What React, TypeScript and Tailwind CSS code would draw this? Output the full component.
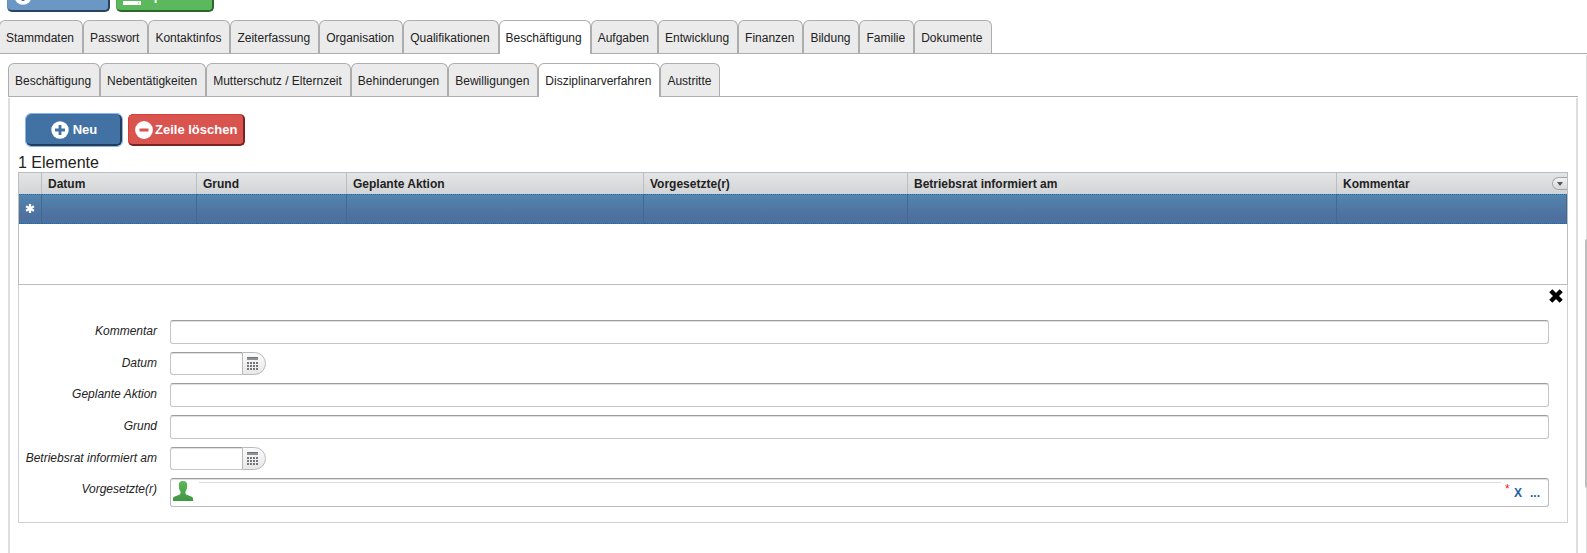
import type { ReactNode } from "react";

const mainTabs = [
  "Stammdaten",
  "Passwort",
  "Kontaktinfos",
  "Zeiterfassung",
  "Organisation",
  "Qualifikationen",
  "Beschäftigung",
  "Aufgaben",
  "Entwicklung",
  "Finanzen",
  "Bildung",
  "Familie",
  "Dokumente",
];

const subTabs = [
  "Beschäftigung",
  "Nebentätigkeiten",
  "Mutterschutz / Elternzeit",
  "Behinderungen",
  "Bewilligungen",
  "Disziplinarverfahren",
  "Austritte",
];

const columns = [
  { label: "Datum", width: "w-[155px]" },
  { label: "Grund", width: "w-[150px]" },
  { label: "Geplante Aktion", width: "w-[297px]" },
  { label: "Vorgesetzte(r)", width: "w-[264px]" },
  { label: "Betriebsrat informiert am", width: "w-[429px]" },
  { label: "Kommentar", width: "w-auto" },
];

function Tabs({ items, active }: { items: string[]; active: string }) {
  return (
    <div role="tablist" className="flex border-b border-[#adadad]">
      {items.map((item) => (
        <button
          key={item}
          role="tab"
          aria-selected={item === active}
          className={
            item === active
              ? "-mb-px h-[34px] rounded-t-md border border-b-0 border-[#adadad] bg-white pt-px pr-2 pl-[6px] whitespace-nowrap"
              : "h-[33px] rounded-t-md border border-b-0 border-[#adadad] bg-[#ebebeb] pt-[2px] pr-2 pl-[6px] whitespace-nowrap"
          }
        >
          {item}
        </button>
      ))}
    </div>
  );
}

function PlusIcon() {
  return (
    <svg viewBox="0 0 18 18" className="size-[18px]" aria-hidden="true">
      <circle cx="9" cy="9" r="8.7" fill="#fff" />
      <path d="M9 4v10M4 9h10" stroke="#4272a4" strokeWidth="2.8" />
    </svg>
  );
}

function MinusIcon() {
  return (
    <svg viewBox="0 0 18 18" className="size-[18px]" aria-hidden="true">
      <circle cx="9" cy="9" r="8.9" fill="#fff" />
      <path d="M4.500 9h9" stroke="#d9534f" strokeWidth="3" />
    </svg>
  );
}

function DiskIcon() {
  return (
    <svg viewBox="0 0 18 18" className="size-[18px]" aria-hidden="true">
      <path d="M0 14h18v4H0zM3 1h12v11H3z" fill="#fff" />
      <path d="M15 16h1" stroke="#5cb85c" />
    </svg>
  );
}

function CalendarIcon() {
  return (
    <svg viewBox="0 0 11 13" className="h-[13px] w-[11px]" shapeRendering="crispEdges" aria-hidden="true">
      <path d="M0 0h11v3H0z" fill="#8d9299" />
      <path d="M0 .5h11" stroke="#6f747b" />
      <path
        d="M0 6h11M0 9h11M0 12h11"
        stroke="#73777d"
        strokeWidth="2"
        strokeDasharray="2 1"
      />
    </svg>
  );
}

function PersonIcon() {
  return (
    <svg viewBox="0 0 20 20" className="h-5 w-5" aria-hidden="true">
      <defs>
        <linearGradient id="person" x1="0" y1="0" x2="0" y2="1">
          <stop offset="0" stopColor="#5cb85c" />
          <stop offset="1" stopColor="#419641" />
        </linearGradient>
      </defs>
      <path
        d="M10 0c3 0 4.200 1.500 4.200 4.200 0 2.600-.4 4.600-1.700 6.300v1.600c0 .9.400 1.400 1.300 1.700l4.400 1.600c1.300.5 1.800 1 1.800 2.100V20H0v-2.500c0-1.100.5-1.600 1.800-2.100l4.400-1.600c.9-.3 1.300-.8 1.300-1.700v-1.600C6.200 8.800 5.800 6.800 5.800 4.200 5.800 1.500 7 0 10 0z"
        fill="url(#person)"
      />
    </svg>
  );
}

function FormRow({ id, label, children }: { id: string; label: string; children: ReactNode }) {
  return (
    <div className="flex">
      <label htmlFor={id} className="w-[138px] shrink-0 pt-[3px] text-right leading-4 italic">
        {label}
      </label>
      <div className="ml-[13px] flex min-w-0 flex-1">{children}</div>
    </div>
  );
}

function TextField({ id, label }: { id: string; label: string }) {
  return (
    <FormRow id={id} label={label}>
      <input
        id={id}
        type="text"
        className="h-6 w-full rounded-[3px] border border-[#c5c5c5] border-t-[#9d9d9d] bg-white px-1 shadow-[inset_0_1px_0_#e0e0e0]"
      />
    </FormRow>
  );
}

function DateField({ id, label }: { id: string; label: string }) {
  return (
    <FormRow id={id} label={label}>
      <input
        id={id}
        type="text"
        className="h-[23px] w-[72px] rounded-l-[3px] border border-r-0 border-[#c5c5c5] border-t-[#9d9d9d] bg-white px-1 shadow-[inset_0_1px_0_#e0e0e0]"
      />
      <button
        type="button"
        aria-label={`${label} auswählen`}
        className="flex h-[23px] w-6 items-center rounded-r-full border border-[#b9b9b9] bg-linear-to-b from-[#fafafa] to-[#e8e8e8] pl-1"
      >
        <CalendarIcon />
      </button>
    </FormRow>
  );
}

export default function App() {
  return (
    <div className="flex h-screen flex-col overflow-hidden bg-white font-['Liberation_Sans',Arial,sans-serif] text-xs text-[#222]">
      <div className="flex h-3 shrink-0 items-end gap-[6px] overflow-hidden pl-[7px] text-[13px] font-bold text-white">
        <button className="flex h-8 w-[103px] shrink-0 items-center gap-1 rounded-[5px] border border-r-2 border-b-2 border-[#5f8fbf] border-r-[#27435f] border-b-[#27435f] bg-[#6b97c5] pl-[6px]">
          <PlusIcon />
          Neu
        </button>
        <button className="flex h-8 w-[98px] shrink-0 items-center gap-1 rounded-[5px] border border-r-2 border-b-2 border-[#4cae4c] border-r-[#2d672d] border-b-[#2d672d] bg-[#5cb85c] pl-[6px]">
          <DiskIcon />
          Speichern
        </button>
      </div>

      <div className="-ml-px shrink-0 pt-2">
        <Tabs items={mainTabs} active="Beschäftigung" />
      </div>

      <div className="relative mt-px flex min-h-0 flex-1 flex-col border-r border-[#e0e0e0] pt-2 pr-2 pl-2">
        <Tabs items={subTabs} active="Disziplinarverfahren" />

        <main className="mt-px min-h-0 flex-1 border-x-2 border-[#dedede] px-2 pt-4">
          <div className="flex gap-[6px] pl-2 text-[13px] font-bold text-white">
            <button className="flex h-8 w-24 items-center justify-center gap-1 rounded-[5px] border border-r-2 border-b-2 border-[#386fa6] border-r-[#213d5a] border-b-[#213d5a] bg-[#4272a4] pl-px outline-1 outline-[#8ab4f8]">
              <PlusIcon />
              Neu
            </button>
            <button className="flex h-8 items-center gap-[2px] rounded-[5px] border border-r-2 border-b-2 border-[#d43f3a] border-r-[#7c2220] border-b-[#7c2220] bg-[#d9534f] px-[6px]">
              <MinusIcon />
              Zeile löschen
            </button>
          </div>

          <p className="mt-2 text-base leading-[18px]">1 Elemente</p>

          <div className="h-[113px] border border-[#bcbdbf]">
            <table className="w-full table-fixed border-separate border-spacing-0">
              <thead>
                <tr className="h-[21px] bg-linear-to-b from-[#e4e5e7] to-[#d3d4d6]">
                  <th className="w-[23px] border-r border-[#bcbdbf]" />
                  {columns.map((column) => (
                    <th
                      key={column.label}
                      className={`${column.width} border-r border-[#bcbdbf] p-0 text-left font-bold last:border-r-0`}
                    >
                      <div className="flex items-center justify-between pl-[6px]">
                        {column.label}
                        {column.label === "Kommentar" && (
                          <button
                            aria-label="Spalten wählen"
                            className="flex h-[13px] w-[15px] items-center justify-center rounded-l-full border border-r-0 border-[#a5a6a8] bg-linear-to-b from-[#f2f2f2] to-[#d8d8d8]"
                          >
                            <svg viewBox="0 0 6 4" className="h-1 w-[6px]" aria-hidden="true">
                              <path d="M0 0h6L3 4z" fill="#555" />
                            </svg>
                          </button>
                        )}
                      </div>
                    </th>
                  ))}
                </tr>
              </thead>
              <tbody>
                <tr className="h-[30px] bg-linear-to-b from-[#5486ae] to-[#4d709f] to-75%">
                  <td className="border-y border-r border-dotted border-y-[#0f6cbd] border-r-[#44698f] p-0 [border-right-style:solid]">
                    <svg viewBox="0 0 10 10" className="mx-auto size-[10px]" aria-label="Neu">
                      <path
                        d="M5 0v9M1.100 2.250l7.800 4.500M8.900 2.250l-7.800 4.500"
                        stroke="#fff"
                        strokeWidth="2.200"
                      />
                    </svg>
                  </td>
                  {columns.map((column) => (
                    <td
                      key={column.label}
                      className="border-y border-r border-dotted border-y-[#0f6cbd] border-r-[#44698f] p-0 [border-right-style:solid]"
                    />
                  ))}
                </tr>
              </tbody>
            </table>
          </div>

          <form className="border border-t-0 border-[#d0d0d0] pr-[18px] pb-[15px]">
            <div className="-mr-[14px] flex h-[35px] justify-end pt-1">
              <button type="button" aria-label="Schließen" className="size-[14px]">
                <svg viewBox="0 0 14 14" className="size-[14px]">
                  <path d="M1.800 1.800l10.400 10.400M12.200 1.800L1.800 12.200" stroke="#000" strokeWidth="4.400" />
                </svg>
              </button>
            </div>
            <div className="flex flex-col gap-2">
              <TextField id="kommentar" label="Kommentar" />
              <DateField id="datum" label="Datum" />
              <TextField id="aktion" label="Geplante Aktion" />
              <TextField id="grund" label="Grund" />
              <DateField id="betriebsrat" label="Betriebsrat informiert am" />
              <FormRow id="vorgesetzte" label="Vorgesetzte(r)">
                <div className="flex h-[29px] w-full rounded-[3px] border border-[#bcbcbc] border-t-[#9d9d9d] pt-[2px] pr-2 pl-[2px] shadow-[inset_0_1px_0_#e0e0e0]">
                  <PersonIcon />
                  <input
                    id="vorgesetzte"
                    type="text"
                    className="mt-px ml-[6px] h-5 min-w-0 flex-1 border-t border-[#dcdcdc] px-1"
                  />
                  <span className="ml-1 w-[5px] text-[#e0202a]">*</span>
                  <button type="button" className="ml-1 pb-px font-bold text-[#1d62a5]">
                    X
                  </button>
                  <button type="button" className="ml-2 pb-px font-bold text-[#1d62a5]">
                    ...
                  </button>
                </div>
              </FormRow>
            </div>
          </form>
        </main>

        {/* scroll thumb on the outer panel's edge */}
        <div className="absolute top-[37%] -right-px h-1/2 w-[2px] rounded-l-sm bg-[#bdbdbd]" />
      </div>
    </div>
  );
}
